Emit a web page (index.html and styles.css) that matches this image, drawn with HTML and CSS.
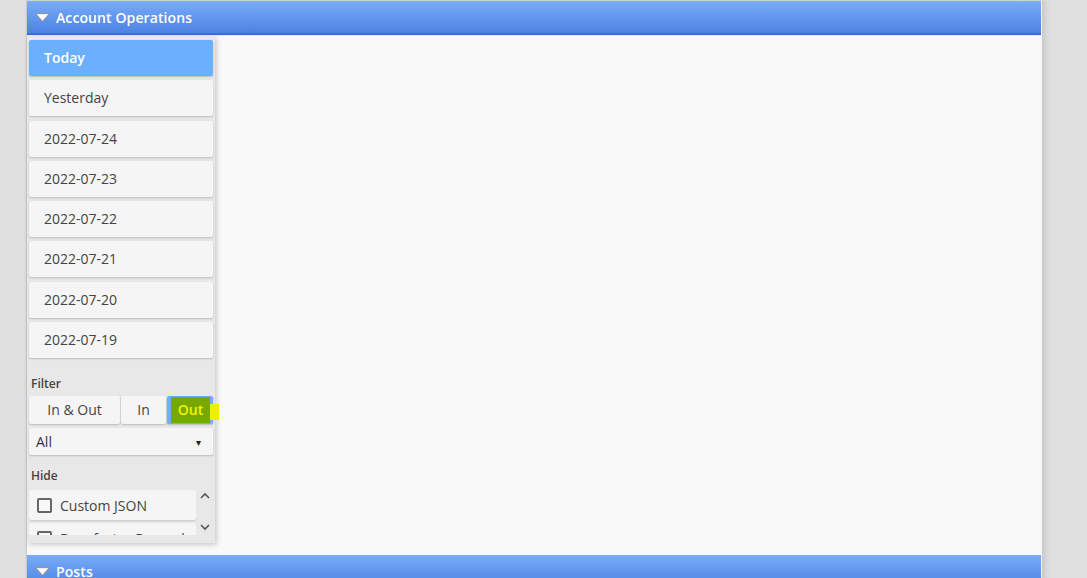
FILE: index.html
```html
<!DOCTYPE html>
<html>
<head>
<meta charset="utf-8">
<link rel="stylesheet" href="styles.css">
</head>
<body>
<div class="page">
  <div class="section-head">
    <svg class="tri" width="15" height="9" viewBox="0 0 15 9"><path d="M0.7 0.7 H14.3 L7.5 8.3 Z" fill="#fff" stroke="#8f8f8f" stroke-width="1"/></svg>
    <span class="head-title">Account Operations</span>
  </div>
  <div class="section-body">
    <div class="sidebar">
      <div class="dates">
        <div class="day active">Today</div>
        <div class="day">Yesterday</div>
        <div class="day">2022-07-24</div>
        <div class="day">2022-07-23</div>
        <div class="day">2022-07-22</div>
        <div class="day">2022-07-21</div>
        <div class="day">2022-07-20</div>
        <div class="day">2022-07-19</div>
      </div>
      <div class="label filter-label">Filter</div>
      <div class="btn-group">
        <div class="seg seg-both">In &amp; Out</div>
        <div class="seg seg-in">In</div>
        <div class="seg seg-out"><span class="mark">Out</span></div>
      </div>
      <div class="select">
        <span>All</span>
        <span class="caret">▾</span>
      </div>
      <div class="label hide-label">Hide</div>
      <div class="hide-list">
        <div class="checks">
          <div class="check"><span class="box"></span>Custom JSON</div>
          <div class="check"><span class="box"></span>Benefactor Reward</div>
        </div>
        <div class="scroller">
          <svg width="10" height="7" viewBox="0 0 10 7"><path d="M1 6 L5 2 L9 6" fill="none" stroke="#555" stroke-width="1.6"/></svg>
          <svg width="10" height="7" viewBox="0 0 10 7"><path d="M1 1 L5 5 L9 1" fill="none" stroke="#555" stroke-width="1.6"/></svg>
        </div>
      </div>
    </div>
    <div class="main"></div>
  </div>
  <div class="section-head posts">
    <svg class="tri" width="15" height="9" viewBox="0 0 15 9"><path d="M0.7 0.7 H14.3 L7.5 8.3 Z" fill="#fff" stroke="#8f8f8f" stroke-width="1"/></svg>
    <span class="head-title">Posts</span>
  </div>
</div>
</body>
</html>
```

FILE: styles.css
```css
html, body {
  margin: 0;
  padding: 0;
  background: #e0e0e0;
  font-family: "Open Sans", "Liberation Sans", sans-serif;
  color: #444;
  overflow: hidden;
  height: 578px;
}

.page {
  margin-left: 26px;
  width: 1014px;
  background: #f9f9f9;
  border-left: 1px solid #c9c9c9;
  border-right: 1px solid #f4f4f4;
  box-shadow: 3px 0 6px rgba(0,0,0,0.12);
  height: 600px;
  border-top: 1px solid #d2d2d2;
}

.section-head {
  height: 32px;
  background: linear-gradient(#79acfa, #4c82e2);
  border-bottom: 2px solid #3d6fd0;
  display: flex;
  align-items: center;
  padding-left: 8px;
  gap: 6px;
  box-sizing: content-box;
}

.head-title {
  color: #fff;
  font-weight: 600;
  font-size: 14px;
  letter-spacing: 0.1px;
}

.tri {
  display: block;
  margin-top: 1px;
}

.section-body {
  display: flex;
  height: 519px;
  border-top: 1px solid #e6e6e6;
}

.sidebar {
  width: 188px;
  background: #e8e8e8;
  padding: 4px 2px 0 2px;
  box-sizing: border-box;
  height: 507px;
  box-shadow: 2px 2px 5px rgba(0,0,0,0.18);
  display: flex;
  flex-direction: column;
}

.dates {
  display: flex;
  flex-direction: column;
  gap: 4.3px;
}

.day {
  height: 36px;
  line-height: 36px;
  padding-left: 15px;
  background: #f5f5f5;
  border-radius: 2px;
  box-shadow: 0 1px 2px rgba(0,0,0,0.2);
  font-size: 14px;
  color: #444;
}

.day.active {
  background: #6ab0ff;
  color: #fff;
  font-weight: 600;
}

.label {
  font-size: 12px;
  font-weight: 600;
  color: #444;
  padding-left: 2px;
  height: 18px;
  line-height: 18px;
}

.filter-label {
  margin-top: 17px;
  margin-bottom: 3px;
}

.btn-group {
  display: flex;
  height: 28px;
  gap: 1px;
}

.seg {
  background: #f5f5f5;
  font-size: 14px;
  line-height: 28px;
  text-align: center;
  border-radius: 2px;
  box-shadow: 0 1px 2px rgba(0,0,0,0.2);
}

.seg-both { width: 91px; }
.seg-in { width: 45px; }
.seg-out {
  width: 46px;
  background: #6ab0ff;
  position: relative;
  display: flex;
  align-items: center;
  justify-content: flex-end;
}

.mark {
  display: block;
  background: #77a800;
  color: #f4f400;
  font-weight: 600;
  line-height: 26px;
  width: 39px;
  text-align: center;
  margin-right: 3px;
  position: relative;
}

.mark::after {
  content: "";
  position: absolute;
  right: -9px;
  top: 7px;
  width: 9px;
  height: 16px;
  background: #eef000;
}

.select {
  margin-top: 4px;
  height: 27px;
  background: #f5f5f5;
  border-radius: 2px;
  box-shadow: 0 1px 2px rgba(0,0,0,0.2);
  display: flex;
  justify-content: space-between;
  align-items: center;
  padding: 0 12px 0 7px;
  font-size: 14px;
  color: #333;
}

.caret {
  font-size: 10px;
  color: #222;
}

.hide-label {
  margin-top: 12px;
  margin-bottom: 5px;
}

.hide-list {
  display: flex;
  height: 45px;
  overflow: hidden;
}

.checks {
  width: 167px;
  display: flex;
  flex-direction: column;
  gap: 3px;
}

.check {
  height: 30px;
  flex-shrink: 0;
  background: #f5f5f5;
  border-radius: 2px;
  box-shadow: 0 1px 2px rgba(0,0,0,0.15);
  display: flex;
  align-items: center;
  padding-left: 8px;
  font-size: 14px;
  color: #444;
  gap: 8px;
}

.box {
  width: 11px;
  height: 11px;
  border: 2px solid #666;
  border-radius: 2px;
  background: #f8f8f8;
}

.scroller {
  flex: 1;
  display: flex;
  flex-direction: column;
  justify-content: space-between;
  align-items: center;
  padding: 2px 0 4px 0;
  background: #e8e8e8;
}

.main {
  flex: 1;
}
```
